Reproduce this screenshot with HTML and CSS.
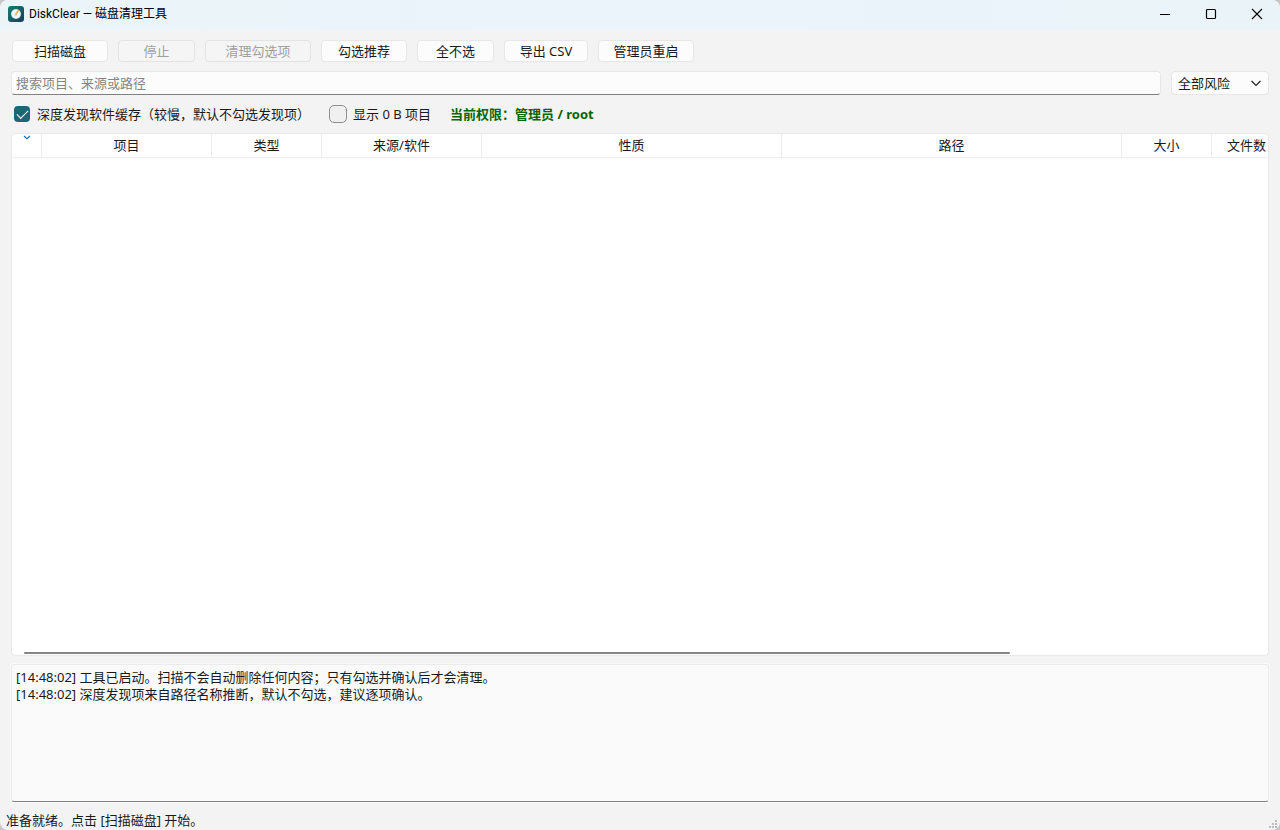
FILE: index.html
```html
<!DOCTYPE html>
<html lang="zh-CN">
<head>
<meta charset="utf-8">
<title>DiskClear — 磁盘清理工具</title>
<link rel="stylesheet" href="styles.css">
</head>
<body>
<div class="window">
  <header class="titlebar">
    <svg class="app-icon" width="16" height="16" viewBox="0 0 16 16" aria-hidden="true">
      <defs><linearGradient id="tile" x1="0" y1="0" x2="1" y2="1"><stop offset="0" stop-color="#12806f"/><stop offset="1" stop-color="#203a5c"/></linearGradient></defs>
      <rect width="16" height="16" rx="3" fill="url(#tile)"/>
      <circle cx="8" cy="8" r="5" fill="#cfe0e4"/>
      <circle cx="8" cy="8" r="4" fill="#f5f8f8"/>
      <path d="M8 8 L10.4 4.6" stroke="#f3a84e" stroke-width="1.6" stroke-linecap="round"/>
      <circle cx="7.8" cy="8.4" r="1.2" fill="#d8c3a6"/>
    </svg>
    <h1 class="title">DiskClear — 磁盘清理工具</h1>
    <div class="window-controls">
      <button class="window-button" aria-label="最小化"><svg width="12" height="12" viewBox="0 0 12 12"><path d="M1 6.5H11" stroke="#000" fill="none"/></svg></button>
      <button class="window-button" aria-label="最大化"><svg width="12" height="12" viewBox="0 0 12 12"><rect x="1.5" y="1.5" width="9" height="9" rx="1" stroke="#000" stroke-width="1.2" fill="none"/></svg></button>
      <button class="window-button" aria-label="关闭"><svg width="12" height="12" viewBox="0 0 12 12"><path d="M1 1L11 11M11 1L1 11" stroke="#000" stroke-width="1.1" fill="none"/></svg></button>
    </div>
  </header>
  <main class="content">
    <div class="toolbar">
      <button class="button wide">扫描磁盘</button>
      <button class="button short" disabled>停止</button>
      <button class="button extra" disabled>清理勾选项</button>
      <button class="button">勾选推荐</button>
      <button class="button short">全不选</button>
      <button class="button export">导出 CSV</button>
      <button class="button wide">管理员重启</button>
    </div>
    <div class="filters">
      <input class="search" type="text" placeholder="搜索项目、来源或路径" aria-label="搜索项目、来源或路径">
      <div class="select-box">
        <select class="risk" aria-label="风险"><option>全部风险</option></select>
        <svg class="chevron" width="12" height="12" viewBox="0 0 12 12" aria-hidden="true"><path d="M1.5 4L6 8.5L10.5 4" fill="none" stroke="#222" stroke-width="1.2"/></svg>
      </div>
    </div>
    <div class="options">
      <label class="option"><input class="check" type="checkbox" checked>深度发现软件缓存（较慢，默认不勾选发现项）</label>
      <label class="option"><input class="check" type="checkbox">显示 0 B 项目</label>
      <strong class="permission">当前权限：管理员 / root</strong>
    </div>
    <section class="results">
      <table class="grid">
        <colgroup>
          <col class="col-check"><col class="col-item"><col class="col-type"><col class="col-source"><col class="col-nature"><col class="col-path"><col class="col-size"><col class="col-files">
        </colgroup>
        <thead>
          <tr>
            <th class="sorted" aria-label="勾选"><svg width="8" height="5" viewBox="0 0 8 5"><path d="M1 1L4 3.8L7 1" fill="none" stroke="#1f6fb5" stroke-width="1.2"/></svg></th>
            <th>项目</th><th>类型</th><th>来源/软件</th><th>性质</th><th>路径</th><th>大小</th><th>文件数</th>
          </tr>
        </thead>
      </table>
      <div class="scrollbar"><div class="thumb"></div></div>
    </section>
    <section class="log" role="log">
      <p>[14:48:02] 工具已启动。扫描不会自动删除任何内容；只有勾选并确认后才会清理。</p>
      <p>[14:48:02] 深度发现项来自路径名称推断，默认不勾选，建议逐项确认。</p>
    </section>
  </main>
  <footer class="statusbar">
    <span>准备就绪。点击 [扫描磁盘] 开始。</span>
    <svg class="grip" width="8" height="8" viewBox="0 0 8 8" aria-hidden="true"><path d="M6 0h2v2H6zM3 3h2v2H3zM6 3h2v2H6zM0 6h2v2H0zM3 6h2v2H3zM6 6h2v2H6z" fill="#bdbdbd"/></svg>
  </footer>
</div>
</body>
</html>
```
FILE: styles.css
```css
* {
  box-sizing: border-box;
}

body {
  margin: 0;
  background: #c4c6c8;
  color: #1a1a1a;
  font: 13px/17px "Noto Sans", "Noto Sans CJK SC", sans-serif;
}

button,
input,
select {
  font: inherit;
  color: inherit;
}

.window {
  display: flex;
  flex-direction: column;
  height: 100vh;
  overflow: hidden;
  border-radius: 8px;
  background: #f3f3f3;
}

.titlebar {
  display: flex;
  align-items: center;
  flex: none;
  height: 30px;
  padding: 0 0 2px 8px;
  background: linear-gradient(90deg, #ebf5f8, #ebf3fb 40%, #ebf3fb 60%, #eaf4f8);
}

.title {
  margin: 0 auto 0 5px;
  color: #000;
  font-family: Roboto, "Noto Sans CJK SC", sans-serif;
  font-size: 12px;
  font-weight: 400;
}

.window-controls {
  display: flex;
}

.window-button {
  display: grid;
  place-items: center;
  width: 46px;
  height: 28px;
  padding: 0;
  border: 0;
  background: none;
}

.content {
  display: flex;
  flex: 1;
  flex-direction: column;
  min-height: 0;
  padding: 10px 11px 0;
}

.toolbar {
  display: flex;
  gap: 10px;
  margin: 0 1px 9px;
}

.button {
  width: 86px;
  height: 22px;
  padding: 0 0 1px;
  border: 1px solid #e7e7e7;
  border-radius: 4px;
  background: #fcfcfc;
  line-height: 16px;
}

.button.short {
  width: 77px;
}

.button.export {
  width: 84px;
}

.button.wide {
  width: 96px;
}

.button.extra {
  width: 106px;
}

.button:disabled {
  border-color: #e3e3e3;
  background: #f5f5f5;
  color: #a0a0a0;
}

.filters {
  display: flex;
  gap: 10px;
}

.search {
  flex: 1;
  min-width: 0;
  height: 24px;
  padding: 0 4px;
  border: 1px solid #e7e7e7;
  border-bottom-color: #808080;
  border-radius: 4px;
  background: #fcfcfc;
}

.search::placeholder {
  color: #858585;
  opacity: 1;
}

.select-box {
  display: grid;
  align-items: center;
  width: 98px;
}

.risk,
.chevron {
  grid-area: 1 / 1;
}

.risk {
  width: 100%;
  height: 24px;
  padding: 0 6px;
  border: 1px solid #e7e7e7;
  border-radius: 4px;
  background: #fcfcfc;
  appearance: none;
}

.chevron {
  justify-self: end;
  margin-right: 7px;
  pointer-events: none;
}

.options {
  display: flex;
  align-items: center;
  height: 38px;
  padding-left: 2px;
}

.option {
  display: flex;
  align-items: center;
  gap: 6px;
  margin-right: 19px;
}

.check {
  display: grid;
  place-items: center;
  width: 18px;
  height: 18px;
  margin: 0;
  border: 1px solid #909090;
  border-radius: 5px;
  background: #f0f0f0;
  appearance: none;
}

.check:checked {
  border-color: transparent;
  background: #1d6678;
  background-clip: padding-box;
}

.check:checked::before {
  width: 10px;
  height: 5px;
  margin-bottom: 3px;
  border: solid #fff;
  border-width: 0 0 1px 1px;
  content: "";
  transform: rotate(-45deg);
}

.permission {
  color: #006400;
}

.results {
  display: flex;
  flex: 1;
  flex-direction: column;
  justify-content: space-between;
  min-height: 0;
  overflow: hidden;
  border: 1px solid #e9e9e9;
  border-radius: 4px;
  background: #fff;
}

.grid {
  width: 1270px;
  border-collapse: separate;
  border-spacing: 0;
  table-layout: fixed;
}

.grid th {
  height: 24px;
  padding: 0;
  border-right: 1px solid #ededed;
  border-bottom: 1px solid #ededed;
  font-weight: 400;
  text-align: center;
}

.grid .sorted {
  line-height: 0;
  vertical-align: top;
}

.sorted svg {
  margin-top: 1px;
}

.col-check {
  width: 30px;
}

.col-item {
  width: 170px;
}

.col-type {
  width: 110px;
}

.col-source {
  width: 160px;
}

.col-nature {
  width: 300px;
}

.col-path {
  width: 340px;
}

.col-size {
  width: 90px;
}

.col-files {
  width: 70px;
}

.scrollbar {
  padding: 0 12px 1px;
}

.thumb {
  width: 80%;
  height: 2px;
  border-radius: 1px;
  background: #858585;
}

.log {
  flex: none;
  height: 138px;
  margin-top: 8px;
  padding: 4px;
  border: 1px solid #ebebeb;
  border-bottom-color: #808080;
  border-radius: 3px;
  background: #fafafa;
  box-shadow: 0 0 0 1px #fafafa;
}

.log p {
  margin: 0;
}

.statusbar {
  display: flex;
  justify-content: space-between;
  flex: none;
  height: 28px;
  padding: 10px 3px 0 6px;
}

.grip {
  margin-top: 8px;
}
```
